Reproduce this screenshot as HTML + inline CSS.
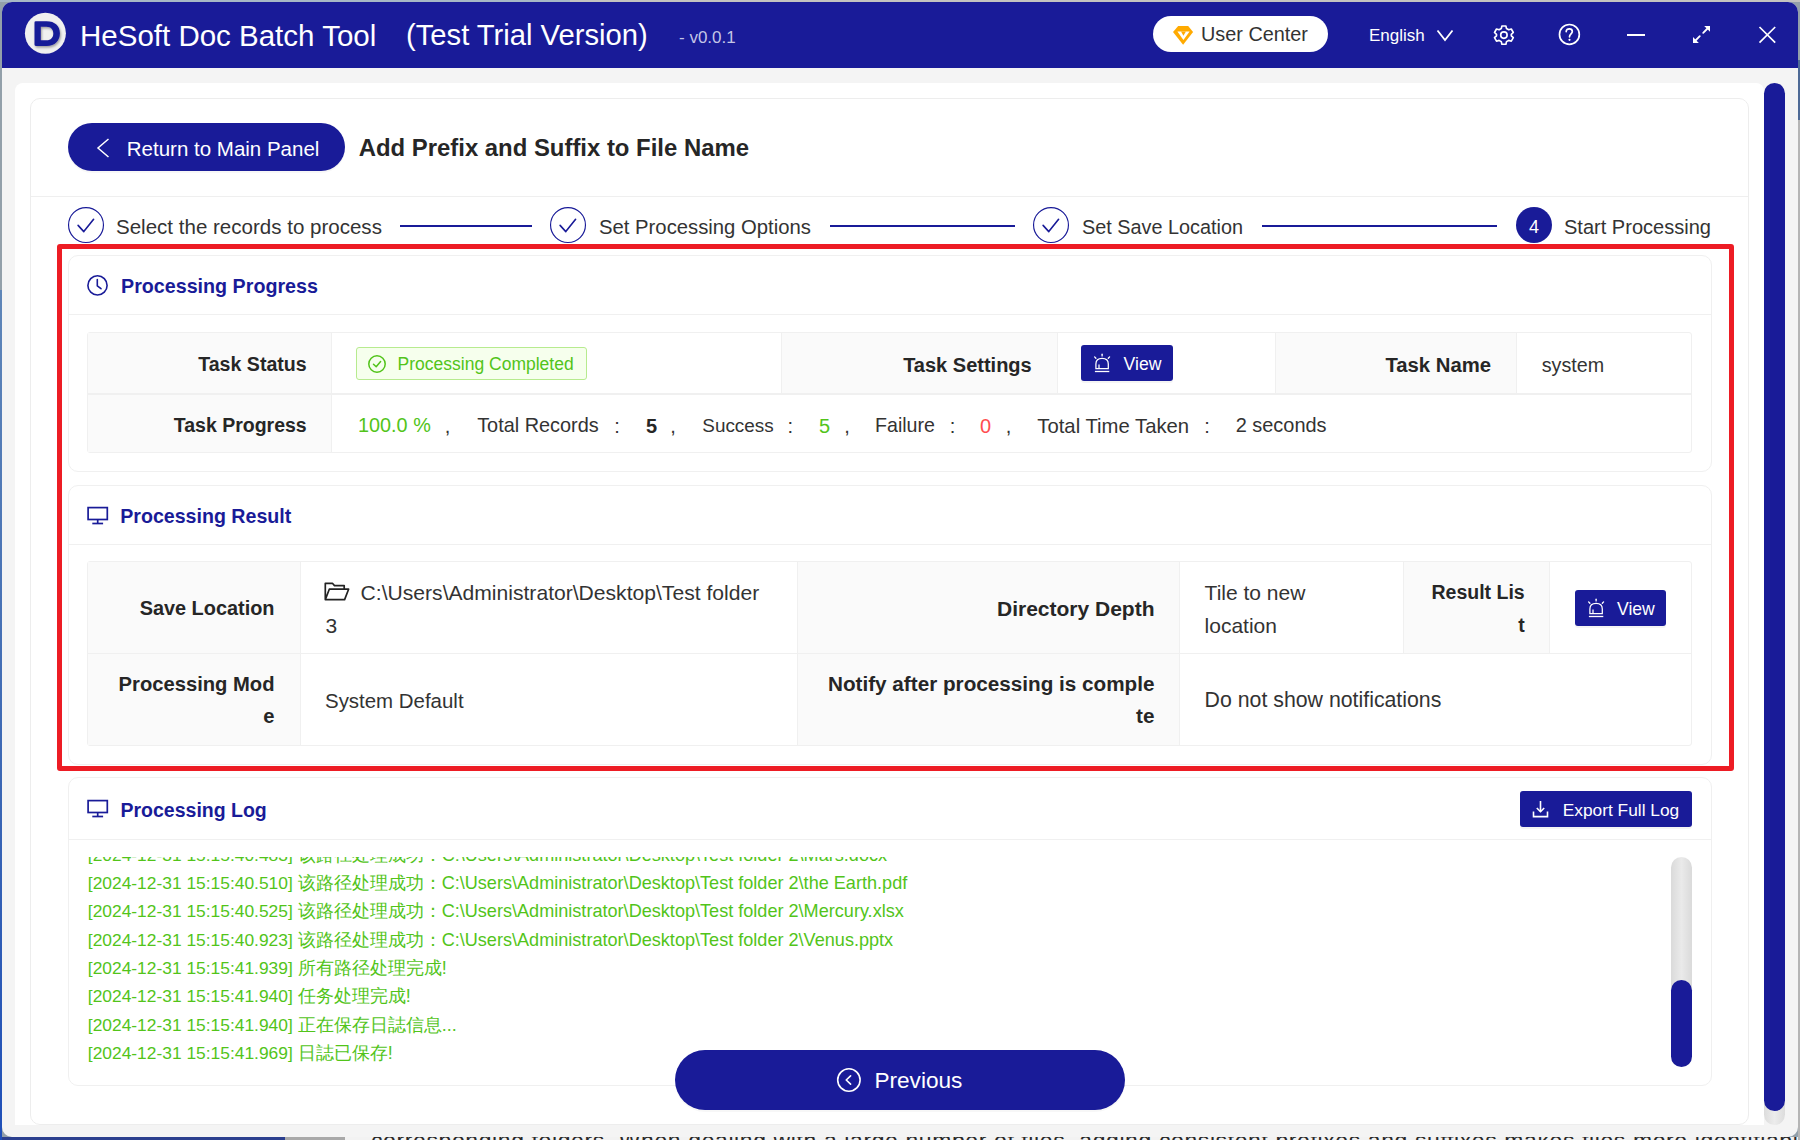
<!DOCTYPE html>
<html><head><meta charset='utf-8'><title>HeSoft Doc Batch Tool</title>
<style>
html,body{margin:0;padding:0;width:1800px;height:1140px;overflow:hidden;background:#93a0aa}
body{position:relative;font-family:"Liberation Sans",sans-serif}
.a{position:absolute}
.t{position:absolute;white-space:nowrap}
svg{overflow:visible}
</style></head><body>
<div class='a' style='left:0;top:0;width:1800px;height:1140px;background:#93a0aa'></div>
<div class='a' style='left:0;top:1137px;width:285px;height:3px;background:#2b3f8e'></div>
<div class='a' style='left:285px;top:1137px;width:60px;height:3px;background:#a9a9a9'></div>
<div class='a' style='left:345px;top:1137px;width:1455px;height:3px;background:#f2f2f2;overflow:hidden'><div style='position:absolute;left:26px;top:-7px;font-size:23px;line-height:23px;color:#2a2a2a;white-space:nowrap;letter-spacing:0.6px'>corresponding folders. When dealing with a large number of files, adding consistent prefixes and suffixes makes files more identifiable at a glance, simplifying</div></div>
<div class='a' style='left:0;top:0;width:570px;height:2px;background:#a7b8c6'></div>
<div class='a' style='left:570px;top:0;width:1230px;height:2px;background:#c3c3c0'></div>
<div class='a' style='left:0;top:290px;width:2px;height:850px;background:linear-gradient(180deg,#5f86b8,#3a66b4 60%,#1f4fb8)'></div>
<div class='a' style='left:1798px;top:60px;width:2px;height:60px;background:#4e6a96'></div>
<div class='a' style='left:1798px;top:120px;width:2px;height:1020px;background:#b5b5b5'></div>
<div id='win' class='a' style='left:2px;top:2px;width:1796px;height:1135px;border-radius:10px;overflow:hidden;background:#f4f4f4'><div class='a' style='left:-2px;top:-2px;width:1800px;height:1140px'>
<div class='a' style='left:0px;top:0px;width:1800px;height:68px;background:#191b98;'></div>
<svg class='a' style='left:24px;top:12px;' width='44' height='44' viewBox='0 0 44 44'><defs><filter id='ds' x='-30%' y='-30%' width='160%' height='160%'><feDropShadow dx='1' dy='1.6' stdDeviation='1' flood-color='#000' flood-opacity='0.35'/></filter></defs><circle cx='21.4' cy='21.3' r='20.5' fill='#f0f0f0'/><path filter='url(#ds)' fill-rule='evenodd' d='M10.5 10.5 Q10.5 9.2 11.8 9.2 H22.5 C31 9.2 35.9 14 35.9 21.2 C35.9 28.6 31 33.9 22.5 33.9 H11.8 Q10.5 33.9 10.5 32.6 Z M16.8 14.7 V28.2 H22.5 C27 28.2 29.3 25.3 29.3 21.4 C29.3 17.6 27 14.7 22.5 14.7 Z' fill='#191b98'/></svg>
<div class='t' style='top:21.02px;font-size:29.5px;line-height:29.5px;color:#fff;left:80px;'>HeSoft Doc Batch Tool</div>
<div class='t' style='top:20.98px;font-size:29.2px;line-height:29.2px;color:#fff;left:406px;'>(Test Trial Version)</div>
<div class='t' style='top:28.81px;font-size:17px;line-height:17px;color:#c3c5e6;left:679px;'>- v0.0.1</div>
<div class='a' style='left:1153px;top:16px;width:175px;height:36px;background:#fff;border-radius:18px;'></div>
<svg class='a' style='left:1173px;top:26px;' width='21' height='19' viewBox='0 0 21 19'><path d='M5.2 0 H15.2 L20.1 6 L10.1 18.8 L0 6 Z' fill='#ffaa00'/><path d='M4.4 5.6 H16.6 L10.4 14 Z' fill='#fff'/><path d='M8 5.6 H12.9 L10.45 9.8 Z' fill='#ffaa00'/></svg>
<div class='t' style='top:24.69px;font-size:19.85px;line-height:19.85px;color:#333;left:1201px;'>User Center</div>
<div class='t' style='top:27.11px;font-size:17px;line-height:17px;color:#fff;left:1369px;'>English</div>
<svg class='a' style='left:1436px;top:29px;' width='18' height='13' viewBox='0 0 18 13'><path d='M1.5 1.5 L9 11 L16.5 1.5' fill='none' stroke='#fff' stroke-width='1.8'/></svg>
<svg class='a' style='left:1491.5px;top:22.5px;' width='24' height='24' viewBox='0 0 24 24'><g fill='none' stroke='#fff' stroke-width='1.9' stroke-linejoin='round' transform='translate(11.9 12.1) scale(0.87) translate(-11.9 -12.1)'><path d='M9.6 1.6 H14.2 L14.9 4.6 L17.4 6 L20.4 5.1 L22.7 9.1 L20.4 11.3 V12.9 L22.7 15.1 L20.4 19.1 L17.4 18.2 L14.9 19.6 L14.2 22.6 H9.6 L8.9 19.6 L6.4 18.2 L3.4 19.1 L1.1 15.1 L3.4 12.9 V11.3 L1.1 9.1 L3.4 5.1 L6.4 6 L8.9 4.6 Z'/><circle cx='11.9' cy='12.1' r='3.7'/></g></svg>
<svg class='a' style='left:1557px;top:22px;' width='25' height='25' viewBox='0 0 25 25'><g fill='none' stroke='#fff' stroke-width='1.7'><circle cx='12.4' cy='12.4' r='9.9'/><path d='M9.2 9.6 C9.2 7.6 10.6 6.9 12.3 6.9 C14 6.9 15.3 8 15.3 9.5 C15.3 11.6 12.5 12.2 12.5 14.8' stroke-linecap='round'/></g><circle cx='12.5' cy='17.8' r='1.1' fill='#fff'/></svg>
<div class='a' style='left:1627px;top:33.5px;width:17.5px;height:2.0px;background:#fff;'></div>
<svg class='a' style='left:1690px;top:23px;' width='23' height='23' viewBox='0 0 23 23'><g stroke='#fff' stroke-width='1.8' stroke-linecap='round'><path d='M13.2 9.8 L17.5 5.5'/><path d='M9.8 13.2 L5.5 17.5'/></g><path d='M14.2 2.9 L20 2.9 L20 8.7 Z' fill='#fff'/><path d='M3 14.1 L3 19.9 L8.8 19.9 Z' fill='#fff'/></svg>
<svg class='a' style='left:1757px;top:25px;' width='21' height='19' viewBox='0 0 21 19'><path d='M2.5 2 L18.2 17.6 M18.2 2 L2.5 17.6' stroke='#fff' stroke-width='1.7'/></svg>
<div class='a' style='left:15px;top:83px;width:1749px;height:1042px;background:#fff;border-radius:8px 8px 0 0'></div>
<div class='a' style='left:1764px;top:1090px;width:21px;height:35px;border-radius:0 0 10.5px 10.5px;background:linear-gradient(90deg,#dcdcdc,#ececec 50%,#dcdcdc)'></div>
<div class='a' style='left:1764px;top:83px;width:21px;height:1028px;border-radius:10.5px;background:#191b98'></div>
<div class='a' style='left:30px;top:98px;width:1719px;height:1027px;border:1px solid #ededed;box-sizing:border-box;border-radius:10px;'></div>
<div class='a' style='left:31px;top:196px;width:1717px;height:1px;background:#efefef;'></div>
<div class='a' style='left:68px;top:123px;width:277px;height:48px;border-radius:24px;background:#191b98;box-shadow:0 2px 0 rgba(0,0,0,0.03)'></div>
<svg class='a' style='left:95px;top:138px;' width='16' height='20' viewBox='0 0 16 20'><path d='M13.5 1 L3 10 L13.5 19' fill='none' stroke='#fff' stroke-width='1.5'/></svg>
<div class='t' style='top:138.54px;font-size:20.5px;line-height:20.5px;color:#fff;left:126.8px;'>Return to Main Panel</div>
<div class='t' style='top:135.56px;font-size:23.9px;line-height:23.9px;color:#262626;font-weight:700;left:358.7px;'>Add Prefix and Suffix to File Name</div>
<svg class='a' style='left:67px;top:206px;' width='38' height='38' viewBox='0 0 38 38'><circle cx='19' cy='19' r='17.45' fill='none' stroke='#191b98' stroke-width='1.15'/><path d='M11.1 19.4 L16.8 25.6 L26.6 13.3' fill='none' stroke='#191b98' stroke-width='1.6' stroke-linecap='round' stroke-linejoin='round'/></svg>
<svg class='a' style='left:549px;top:206px;' width='38' height='38' viewBox='0 0 38 38'><circle cx='19' cy='19' r='17.45' fill='none' stroke='#191b98' stroke-width='1.15'/><path d='M11.1 19.4 L16.8 25.6 L26.6 13.3' fill='none' stroke='#191b98' stroke-width='1.6' stroke-linecap='round' stroke-linejoin='round'/></svg>
<svg class='a' style='left:1032px;top:206px;' width='38' height='38' viewBox='0 0 38 38'><circle cx='19' cy='19' r='17.45' fill='none' stroke='#191b98' stroke-width='1.15'/><path d='M11.1 19.4 L16.8 25.6 L26.6 13.3' fill='none' stroke='#191b98' stroke-width='1.6' stroke-linecap='round' stroke-linejoin='round'/></svg>
<svg class='a' style='left:1515px;top:206px;' width='38' height='38' viewBox='0 0 38 38'><circle cx='19' cy='19' r='18' fill='#191b98'/></svg>
<div class='t' style='top:217.66px;font-size:18px;line-height:18px;color:#fff;left:1534px;transform:translateX(-50%);'>4</div>
<div class='t' style='top:216.61px;font-size:20.54px;line-height:20.54px;color:#333;left:116px;'>Select the records to process</div>
<div class='t' style='top:216.82px;font-size:20.29px;line-height:20.29px;color:#333;left:599px;'>Set Processing Options</div>
<div class='t' style='top:218.00px;font-size:19.84px;line-height:19.84px;color:#333;left:1082px;'>Set Save Location</div>
<div class='t' style='top:217.03px;font-size:20.04px;line-height:20.04px;color:#333;left:1564px;'>Start Processing</div>
<div class='a' style='left:400px;top:225px;width:132px;height:2px;background:#191b98;'></div>
<div class='a' style='left:830px;top:225px;width:185px;height:2px;background:#191b98;'></div>
<div class='a' style='left:1262px;top:225px;width:235px;height:2px;background:#191b98;'></div>
<div class='a' style='left:57px;top:244px;width:1677px;height:527px;border:5px solid #ed1c24;box-sizing:border-box;border-radius:3px'></div>
<div class='a' style='left:68px;top:255px;width:1644px;height:217px;border:1px solid #f0f0f0;box-sizing:border-box;border-radius:10px;'></div>
<div class='a' style='left:69px;top:314px;width:1642px;height:1px;background:#f0f0f0;'></div>
<svg class='a' style='left:86px;top:274px;' width='24' height='24' viewBox='0 0 24 24'><g fill='none' stroke='#191b98' stroke-width='1.6'><circle cx='11.5' cy='11.4' r='9.6'/><path d='M11.3 5.6 V11.9 L15 14.7' stroke-linecap='round' stroke-linejoin='round'/></g></svg>
<div class='t' style='top:277.12px;font-size:19.7px;line-height:19.7px;color:#191b98;font-weight:700;left:121px;'>Processing Progress</div>
<div class='a' style='left:87px;top:332px;width:1605px;height:121px;border:1px solid #f0f0f0;box-sizing:border-box;border-radius:3px;overflow:hidden'></div>
<div class='a' style='left:88px;top:333px;width:243px;height:119px;background:#fafafa;'></div>
<div class='a' style='left:781px;top:333px;width:276px;height:61px;background:#fafafa;'></div>
<div class='a' style='left:1275px;top:333px;width:241px;height:61px;background:#fafafa;'></div>
<div class='a' style='left:88px;top:393px;width:1603px;height:2px;background:#f0f0f0;'></div>
<div class='a' style='left:331px;top:333px;width:1px;height:119px;background:#f0f0f0;'></div>
<div class='a' style='left:781px;top:333px;width:1px;height:61px;background:#f0f0f0;'></div>
<div class='a' style='left:1057px;top:333px;width:1px;height:61px;background:#f0f0f0;'></div>
<div class='a' style='left:1275px;top:333px;width:1px;height:61px;background:#f0f0f0;'></div>
<div class='a' style='left:1516px;top:333px;width:1px;height:61px;background:#f0f0f0;'></div>
<div class='t' style='top:355.40px;font-size:19.6px;line-height:19.6px;color:#262626;font-weight:700;right:1493.3px;text-align:right;'>Task Status</div>
<div class='t' style='top:415.79px;font-size:19.5px;line-height:19.5px;color:#262626;font-weight:700;right:1493.3px;text-align:right;'>Task Progress</div>
<div class='t' style='top:355.07px;font-size:20px;line-height:20px;color:#262626;font-weight:700;right:768.3px;text-align:right;'>Task Settings</div>
<div class='t' style='top:354.81px;font-size:20.3px;line-height:20.3px;color:#262626;font-weight:700;right:309px;text-align:right;'>Task Name</div>
<div class='t' style='top:356.32px;font-size:19.7px;line-height:19.7px;color:#333;left:1541.7px;'>system</div>
<div class='a' style='left:356px;top:347px;width:231px;height:33px;background:#f6ffed;border:1px solid #b7eb8f;box-sizing:border-box;border-radius:3px;'></div>
<svg class='a' style='left:366px;top:353px;' width='22' height='22' viewBox='0 0 22 22'><g fill='none' stroke='#52c41a' stroke-width='1.5'><circle cx='11' cy='11' r='8.2'/><path d='M7.5 11.2 L10.2 13.8 L14.6 8.6' stroke-linecap='round' stroke-linejoin='round'/></g></svg>
<div class='t' style='top:356.38px;font-size:17.5px;line-height:17.5px;color:#52c41a;left:397.6px;'>Processing Completed</div>
<div class='a' style='left:1081px;top:345px;width:92px;height:36px;border-radius:3px;background:#191b98;box-shadow:0 2px 0 rgba(0,0,0,0.045)'></div>
<svg class='a' style='left:1093px;top:353px;' width='18' height='20' viewBox='0 0 18 20'><g fill='none' stroke='#fff' stroke-width='1.25'><path d='M2.9 15.6 V11 C2.9 7.3 5.6 5.3 9.1 5.3 C12.6 5.3 15.3 7.3 15.3 11 V15.6 Z'/><path d='M6 15.4 V11.4'/><path d='M1.9 18.5 H16.3' stroke-width='1.3'/></g><g stroke='#fff' stroke-width='1.3' stroke-linecap='round'><path d='M9.1 1.2 V2.9'/><path d='M1.6 3.9 L2.9 5.3'/><path d='M16.6 3.9 L15.3 5.3'/></g></svg>
<div class='t' style='top:355.90px;font-size:17.6px;line-height:17.6px;color:#fff;left:1123.6px;'>View</div>
<div class='t' style='top:415.90px;font-size:19.84px;line-height:19.84px;color:#52c41a;left:358px;'>100.0 %</div>
<div class='t' style='top:415.77px;font-size:20px;line-height:20px;color:#333;left:444.8px;'>,</div>
<div class='t' style='top:415.77px;font-size:20px;line-height:20px;color:#333;left:670.2px;'>,</div>
<div class='t' style='top:415.77px;font-size:20px;line-height:20px;color:#333;left:844.2px;'>,</div>
<div class='t' style='top:415.77px;font-size:20px;line-height:20px;color:#333;left:1005.8px;'>,</div>
<div class='t' style='top:415.77px;font-size:20px;line-height:20px;color:#333;left:614.2px;'>:</div>
<div class='t' style='top:415.77px;font-size:20px;line-height:20px;color:#333;left:787.5px;'>:</div>
<div class='t' style='top:415.77px;font-size:20px;line-height:20px;color:#333;left:949.8px;'>:</div>
<div class='t' style='top:415.77px;font-size:20px;line-height:20px;color:#333;left:1204.2px;'>:</div>
<div class='t' style='top:415.86px;font-size:19.89px;line-height:19.89px;color:#333;left:477.2px;'>Total Records</div>
<div class='t' style='top:415.77px;font-size:20px;line-height:20px;color:#262626;font-weight:700;left:646px;'>5</div>
<div class='t' style='top:416.70px;font-size:18.9px;line-height:18.9px;color:#333;left:702.3px;'>Success</div>
<div class='t' style='top:415.77px;font-size:20px;line-height:20px;color:#52c41a;left:819px;'>5</div>
<div class='t' style='top:416.08px;font-size:19.63px;line-height:19.63px;color:#333;left:875px;'>Failure</div>
<div class='t' style='top:415.77px;font-size:20px;line-height:20px;color:#ff4d4f;left:980px;'>0</div>
<div class='t' style='top:415.51px;font-size:20.3px;line-height:20.3px;color:#333;left:1037.3px;'>Total Time Taken</div>
<div class='t' style='top:415.80px;font-size:19.96px;line-height:19.96px;color:#333;left:1235.7px;'>2 seconds</div>
<div class='a' style='left:68px;top:485px;width:1644px;height:280px;border:1px solid #f0f0f0;box-sizing:border-box;border-radius:10px;'></div>
<div class='a' style='left:69px;top:544px;width:1642px;height:1px;background:#f0f0f0;'></div>
<svg class='a' style='left:86px;top:505px;' width='24' height='22' viewBox='0 0 24 22'><g fill='none' stroke='#191b98' stroke-width='1.7'><rect x='2.1' y='2.6' width='19.2' height='11.9'/><path d='M11.7 14.5 V18.4'/><path d='M6.3 18.5 H17.1'/></g></svg>
<div class='t' style='top:507.09px;font-size:19.62px;line-height:19.62px;color:#191b98;font-weight:700;left:120.2px;'>Processing Result</div>
<div class='a' style='left:87px;top:561px;width:1605px;height:185px;border:1px solid #f0f0f0;box-sizing:border-box;border-radius:3px'></div>
<div class='a' style='left:88px;top:562px;width:212px;height:183px;background:#fafafa;'></div>
<div class='a' style='left:797px;top:562px;width:382px;height:183px;background:#fafafa;'></div>
<div class='a' style='left:1403px;top:562px;width:146px;height:91px;background:#fafafa;'></div>
<div class='a' style='left:88px;top:653px;width:1603px;height:1px;background:#f0f0f0;'></div>
<div class='a' style='left:300px;top:562px;width:1px;height:183px;background:#f0f0f0;'></div>
<div class='a' style='left:797px;top:562px;width:1px;height:183px;background:#f0f0f0;'></div>
<div class='a' style='left:1179px;top:562px;width:1px;height:183px;background:#f0f0f0;'></div>
<div class='a' style='left:1403px;top:562px;width:1px;height:91px;background:#f0f0f0;'></div>
<div class='a' style='left:1549px;top:562px;width:1px;height:91px;background:#f0f0f0;'></div>
<div class='t' style='top:599.05px;font-size:19.9px;line-height:19.9px;color:#262626;font-weight:700;right:1525.5px;text-align:right;'>Save Location</div>
<svg class='a' style='left:323px;top:581px;' width='28' height='21' viewBox='0 0 28 21'><path d='M2.3 18.6 V2.3 H9.4 L11.5 4.6 H21.2 V8.2 M2.3 18.6 L6.3 8.2 H25.6 L21.6 18.6 Z' fill='none' stroke='#222' stroke-width='1.7' stroke-linejoin='round'/></svg>
<div class='t' style='top:582.43px;font-size:21.1px;line-height:21.1px;color:#333;left:360.6px;'>C:\Users\Administrator\Desktop\Test folder</div>
<div class='t' style='top:615.02px;font-size:21px;line-height:21px;color:#333;left:325.4px;'>3</div>
<div class='t' style='top:598.42px;font-size:21px;line-height:21px;color:#262626;font-weight:700;right:645.5px;text-align:right;'>Directory Depth</div>
<div class='t' style='top:582.12px;font-size:21px;line-height:21px;color:#333;left:1204.6px;'>Tile to new</div>
<div class='t' style='top:614.72px;font-size:21px;line-height:21px;color:#333;left:1204.6px;'>location</div>
<div class='t' style='top:583.39px;font-size:19.5px;line-height:19.5px;color:#262626;font-weight:700;right:275.29999999999995px;text-align:right;'>Result Lis</div>
<div class='t' style='top:615.99px;font-size:19.5px;line-height:19.5px;color:#262626;font-weight:700;right:275.29999999999995px;text-align:right;'>t</div>
<div class='a' style='left:1575px;top:590px;width:91px;height:36px;border-radius:3px;background:#191b98;box-shadow:0 2px 0 rgba(0,0,0,0.045)'></div>
<svg class='a' style='left:1587px;top:598px;' width='18' height='20' viewBox='0 0 18 20'><g fill='none' stroke='#fff' stroke-width='1.25'><path d='M2.9 15.6 V11 C2.9 7.3 5.6 5.3 9.1 5.3 C12.6 5.3 15.3 7.3 15.3 11 V15.6 Z'/><path d='M6 15.4 V11.4'/><path d='M1.9 18.5 H16.3' stroke-width='1.3'/></g><g stroke='#fff' stroke-width='1.3' stroke-linecap='round'><path d='M9.1 1.2 V2.9'/><path d='M1.6 3.9 L2.9 5.3'/><path d='M16.6 3.9 L15.3 5.3'/></g></svg>
<div class='t' style='top:601.10px;font-size:17.6px;line-height:17.6px;color:#fff;left:1617px;'>View</div>
<div class='t' style='top:674.20px;font-size:20.2px;line-height:20.2px;color:#262626;font-weight:700;right:1525.5px;text-align:right;'>Processing Mod</div>
<div class='t' style='top:706.10px;font-size:20.2px;line-height:20.2px;color:#262626;font-weight:700;right:1525.5px;text-align:right;'>e</div>
<div class='t' style='top:690.68px;font-size:20.46px;line-height:20.46px;color:#333;left:325px;'>System Default</div>
<div class='t' style='top:673.77px;font-size:20.7px;line-height:20.7px;color:#262626;font-weight:700;right:645.5px;text-align:right;'>Notify after processing is comple</div>
<div class='t' style='top:705.97px;font-size:20.7px;line-height:20.7px;color:#262626;font-weight:700;right:645.5px;text-align:right;'>te</div>
<div class='t' style='top:689.67px;font-size:21.3px;line-height:21.3px;color:#333;left:1204.6px;'>Do not show notifications</div>
<div class='a' style='left:68px;top:777px;width:1644px;height:309px;border:1px solid #f0f0f0;box-sizing:border-box;border-radius:10px;'></div>
<div class='a' style='left:69px;top:839px;width:1642px;height:1px;background:#f0f0f0;'></div>
<svg class='a' style='left:86px;top:798px;' width='24' height='22' viewBox='0 0 24 22'><g fill='none' stroke='#191b98' stroke-width='1.7'><rect x='2.1' y='2.6' width='19.2' height='11.9'/><path d='M11.7 14.5 V18.4'/><path d='M6.3 18.5 H17.1'/></g></svg>
<div class='t' style='top:800.69px;font-size:19.5px;line-height:19.5px;color:#191b98;font-weight:700;left:120.5px;'>Processing Log</div>
<div class='a' style='left:1520px;top:791px;width:172px;height:36px;border-radius:3px;background:#191b98;box-shadow:0 2px 0 rgba(0,0,0,0.045)'></div>
<svg class='a' style='left:1531px;top:800px;' width='20' height='19' viewBox='0 0 20 19'><g fill='none' stroke='#fff' stroke-width='1.6'><path d='M9.5 1 V11.5'/><path d='M5.8 8 L9.5 11.7 L13.2 8'/><path d='M2.5 11.5 V16.6 H16.5 V11.5'/></g></svg>
<div class='t' style='top:801.62px;font-size:17.34px;line-height:17.34px;color:#fff;left:1562.7px;'>Export Full Log</div>
<div class='a' style='left:87px;top:857px;width:1570px;height:210px;overflow:hidden'>
<div style='position:absolute;left:0.8px;top:-16.18px;font-size:17.4px;line-height:28.29px;color:#52c41a;white-space:nowrap'><div>[2024-12-31 15:15:40.483] <span class='cjk' style='display:inline-block;width:144px;font-size:18px'>该路径处理成功：</span><span style='font-size:18.1px'>C:\Users\Administrator\Desktop\Test folder 2\Mars.docx</span></div><div>[2024-12-31 15:15:40.510] <span class='cjk' style='display:inline-block;width:144px;font-size:18px'>该路径处理成功：</span><span style='font-size:18.1px'>C:\Users\Administrator\Desktop\Test folder 2\the Earth.pdf</span></div><div>[2024-12-31 15:15:40.525] <span class='cjk' style='display:inline-block;width:144px;font-size:18px'>该路径处理成功：</span><span style='font-size:18.1px'>C:\Users\Administrator\Desktop\Test folder 2\Mercury.xlsx</span></div><div>[2024-12-31 15:15:40.923] <span class='cjk' style='display:inline-block;width:144px;font-size:18px'>该路径处理成功：</span><span style='font-size:18.1px'>C:\Users\Administrator\Desktop\Test folder 2\Venus.pptx</span></div><div>[2024-12-31 15:15:41.939] <span class='cjk' style='font-size:18px'>所有路径处理完成!</span></div><div>[2024-12-31 15:15:41.940] <span class='cjk' style='font-size:18px'>任务处理完成!</span></div><div>[2024-12-31 15:15:41.940] <span class='cjk' style='font-size:18px'>正在保存日誌信息...</span></div><div>[2024-12-31 15:15:41.969] <span class='cjk' style='font-size:18px'>日誌已保存!</span></div></div>
</div>
<div class='a' style='left:1671px;top:857px;width:21px;height:210px;border-radius:10.5px;background:linear-gradient(90deg,#dadada,#eaeaea 50%,#dadada)'></div>
<div class='a' style='left:1671px;top:980px;width:21px;height:87px;border-radius:10.5px;background:#191b98'></div>
<div class='a' style='left:675px;top:1050px;width:450px;height:60px;border-radius:30px;background:#191b98;box-shadow:0 2px 0 rgba(0,0,0,0.03)'></div>
<svg class='a' style='left:835px;top:1067px;' width='28' height='28' viewBox='0 0 28 28'><g fill='none' stroke='#fff' stroke-width='1.6'><circle cx='13.9' cy='13' r='11.2'/><path d='M15.6 8.8 L11.2 13 L15.6 17.2' stroke-linecap='round' stroke-linejoin='round'/></g></svg>
<div class='t' style='top:1069.75px;font-size:22.62px;line-height:22.62px;color:#fff;left:874.4px;'>Previous</div>
</div></div>
</body></html>
